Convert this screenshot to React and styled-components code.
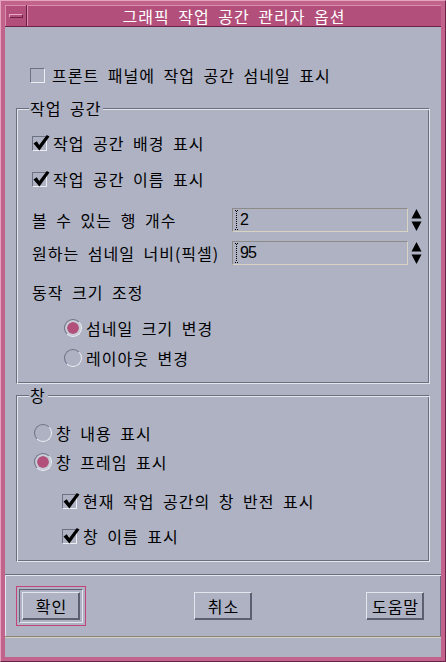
import React from "react";
import styled, { createGlobalStyle } from "styled-components";

const GlobalStyle = createGlobalStyle`
  html, body {
    margin: 0;
    padding: 0;
    background: #aeb2c3;
  }
  body {
    font-family: "Noto Sans CJK KR", "Noto Sans", sans-serif;
    color: #000;
  }
  * {
    box-sizing: border-box;
  }
`;

const Window = styled.div`
  width: 446px;
  height: 662px;
  display: flex;
  flex-direction: column;
  background: #c2638c;
  border: 1px solid;
  border-color: #e6a2bf #6c2248 #6c2248 #e6a2bf;
  padding: 4px;
`;

const TitleBar = styled.div`
  height: 22px;
  display: flex;
  background: #b24f7b;
  border-bottom: 1px solid #6c2248;
`;

const MenuButton = styled.div`
  width: 22px;
  display: flex;
  align-items: center;
  justify-content: center;
  border-right: 1px solid #6c2248;
  box-shadow: inset 1px 1px 0 #dc8dae;
`;

const MenuGlyph = styled.span`
  width: 14px;
  height: 4px;
  border: 1px solid;
  border-color: #e9a8c3 #6c2248 #6c2248 #e9a8c3;
`;

const Title = styled.div`
  flex: 1;
  display: flex;
  align-items: center;
  justify-content: center;
  color: #fff;
  font-size: 16px;
  letter-spacing: 1px;
  word-spacing: 4px;
  box-shadow: inset 1px 1px 0 #dc8dae;
`;

const Body = styled.div`
  flex: 1;
  display: flex;
  flex-direction: column;
  background: #aeb2c3;
`;

const Main = styled.div`
  flex: 1;
  display: flex;
  flex-direction: column;
  padding: 38px 11px 0 11px;
`;

const Row = styled.div`
  height: 20px;
  display: flex;
  align-items: center;
  gap: ${(p) => p.$gap || 6}px;
  margin-left: ${(p) => p.$indent || 0}px;
  margin-top: ${(p) => p.$top || 0}px;
  font-size: 16px;
  letter-spacing: 1px;
  word-spacing: 4px;
  white-space: nowrap;
`;

const Box = styled.span`
  position: relative;
  flex: none;
  width: 15px;
  height: 15px;
  border: 1px solid;
  border-color: #6e7184 #eceef4 #eceef4 #6e7184;

  svg {
    position: absolute;
    left: -1px;
    top: -3px;
  }
`;

const Radio = styled.span`
  flex: none;
  width: 18px;
  height: 18px;
  border-radius: 50%;
  border: 1px solid;
  border-color: #6e7184 #eceef4 #eceef4 #6e7184;
  padding: 2px;
  background: ${(p) => (p.$on ? "#b24f7b" : "transparent")};
  background-clip: content-box;
  box-shadow: ${(p) => (p.$on ? "inset 0 0 0 2px #c9cbd6" : "none")};
`;

const Group = styled.fieldset`
  margin: ${(p) => p.$top || 0}px 0 0 0;
  padding: 0;
  min-width: 0;
  border: 1px solid;
  border-color: #6b6e80 #e4e6ee #e4e6ee #6b6e80;
  box-shadow: inset 1px 1px 0 #e4e6ee, inset -1px -1px 0 #6b6e80;
`;

const Legend = styled.legend`
  margin-left: 12px;
  padding: 0 2px 0 1px;
  height: 18px;
  line-height: 18px;
  font-size: 16px;
  letter-spacing: 1px;
  word-spacing: 4px;
  background: #aeb2c3;
`;

const GroupBody = styled.div`
  display: flex;
  flex-direction: column;
  padding: 0 0 ${(p) => p.$bottom || 0}px ${(p) => p.$left || 0}px;
`;

const FieldRow = styled.div`
  display: flex;
  align-items: center;
  margin-top: ${(p) => p.$top || 0}px;
`;

const FieldLabel = styled.span`
  width: 200px;
  font-size: 16px;
  letter-spacing: 1px;
  word-spacing: 4px;
  white-space: nowrap;
`;

const Field = styled.div`
  width: 176px;
  height: 24px;
  display: flex;
  align-items: center;
  gap: 1px;
  padding-left: 2px;
  border: 1px solid;
  border-color: #8d8b87 #d9d4c2 #d9d4c2 #8d8b87;
  font-family: "Liberation Sans", sans-serif;
  font-size: 16px;
  letter-spacing: -1px;
`;

const Spinner = styled.svg`
  margin-left: 3px;
  flex: none;
`;

const SubLabel = styled.div`
  height: 20px;
  display: flex;
  align-items: center;
  margin-top: ${(p) => p.$top || 0}px;
  font-size: 16px;
  letter-spacing: 1px;
  word-spacing: 4px;
`;

const ButtonPanel = styled.div`
  height: 63px;
  display: grid;
  grid-template-columns: 1fr auto 1fr;
  align-items: center;
  padding: 0 11px;
  border-top: 1px solid #6b6e80;
  border-bottom: 1px solid #8a8578;
  box-shadow: inset 0 1px 0 #e4e6ee, inset 1px 0 0 #e4e6ee, inset -1px 0 0 #6b6e80;
`;

const DefaultRing = styled.div`
  justify-self: start;
  padding: 2px;
  border: 1px solid #c2447a;
`;

const Sunken = styled.div`
  padding: 2px;
  border: 1px solid;
  border-color: #5f6274 #e4e6ee #e4e6ee #5f6274;
`;

const Button = styled.button`
  justify-self: ${(p) => p.$align || "center"};
  margin-right: ${(p) => p.$mr || 0}px;
  width: 58px;
  height: 28px;
  display: flex;
  align-items: center;
  justify-content: center;
  padding: 0 0 0 1px;
  background: #aeb2c3;
  border: 1px solid;
  border-color: #e4e6ee #5c5f70 #5c5f70 #e4e6ee;
  box-shadow: inset -1px -1px 0 #5c5f70;
  font-family: "Noto Sans CJK KR", sans-serif;
  font-size: 16px;
  letter-spacing: 1px;
  color: #000;
`;

const Footer = styled.div`
  height: 20px;
  border-top: 1px solid #d6cfbd;
`;

function Check() {
  return (
    <svg width="18" height="18" viewBox="0 0 18 18">
      <path d="M1.5 9.5 L4.8 7.2 L7.2 11 L14.8 1 L17.5 2.6 L7.4 16.5 Z" fill="#000" />
    </svg>
  );
}

function CheckBox({ checked }) {
  return <Box>{checked && <Check />}</Box>;
}

function Cursor() {
  return (
    <svg width="4" height="20" viewBox="0 0 4 20">
      <rect x="0" y="0" width="1" height="1" fill="#000" />
      <rect x="2" y="0" width="1" height="1" fill="#000" />
      <rect x="0" y="19" width="1" height="1" fill="#000" />
      <rect x="2" y="19" width="1" height="1" fill="#000" />
      {Array.from({ length: 9 }).map((_, i) => (
        <rect key={i} x="1" y={1 + i * 2} width="1" height="1" fill="#000" />
      ))}
    </svg>
  );
}

function SpinArrows() {
  return (
    <Spinner width="11" height="24" viewBox="0 0 11 24">
      <path d="M5.5 1 L10.5 10.5 L0.5 10.5 Z" fill="#000" />
      <path d="M0.5 13.5 L10.5 13.5 L5.5 23 Z" fill="#000" />
    </Spinner>
  );
}

function NumberField({ label, value, top }) {
  return (
    <FieldRow $top={top}>
      <FieldLabel>{label}</FieldLabel>
      <Field>
        <Cursor />
        <span>{value}</span>
      </Field>
      <SpinArrows />
    </FieldRow>
  );
}

export default function App() {
  return (
    <>
      <GlobalStyle />
      <Window>
        <TitleBar>
          <MenuButton>
            <MenuGlyph />
          </MenuButton>
          <Title>그래픽 작업 공간 관리자 옵션</Title>
        </TitleBar>
        <Body>
          <Main>
            <Row $indent={14} $gap={7}>
              <CheckBox />
              프론트 패널에 작업 공간 섬네일 표시
            </Row>

            <Group $top={14}>
              <Legend>작업 공간</Legend>
              <GroupBody $left={15} $bottom={15}>
                <Row $top={16}>
                  <CheckBox checked />
                  작업 공간 배경 표시
                </Row>
                <Row $top={16}>
                  <CheckBox checked />
                  작업 공간 이름 표시
                </Row>
                <NumberField label="볼 수 있는 행 개수" value="2" top={19} />
                <NumberField label="원하는 섬네일 너비(픽셀)" value="95" top={9} />
                <SubLabel $top={17}>동작 크기 조정</SubLabel>
                <Row $top={16} $indent={32} $gap={4}>
                  <Radio $on />
                  섬네일 크기 변경
                </Row>
                <Row $top={10} $indent={32} $gap={4}>
                  <Radio />
                  레이아웃 변경
                </Row>
              </GroupBody>
            </Group>

            <Group $top={2}>
              <Legend>창</Legend>
              <GroupBody $left={17} $bottom={15}>
                <Row $top={19} $gap={4}>
                  <Radio />
                  창 내용 표시
                </Row>
                <Row $top={9} $gap={4}>
                  <Radio $on />
                  창 프레임 표시
                </Row>
                <Row $top={19} $indent={28}>
                  <CheckBox checked />
                  현재 작업 공간의 창 반전 표시
                </Row>
                <Row $top={15} $indent={28}>
                  <CheckBox checked />
                  창 이름 표시
                </Row>
              </GroupBody>
            </Group>
          </Main>

          <ButtonPanel>
            <DefaultRing>
              <Sunken>
                <Button>확인</Button>
              </Sunken>
            </DefaultRing>
            <Button>취소</Button>
            <Button $align="end" $mr={6}>
              도움말
            </Button>
          </ButtonPanel>
          <Footer />
        </Body>
      </Window>
    </>
  );
}
